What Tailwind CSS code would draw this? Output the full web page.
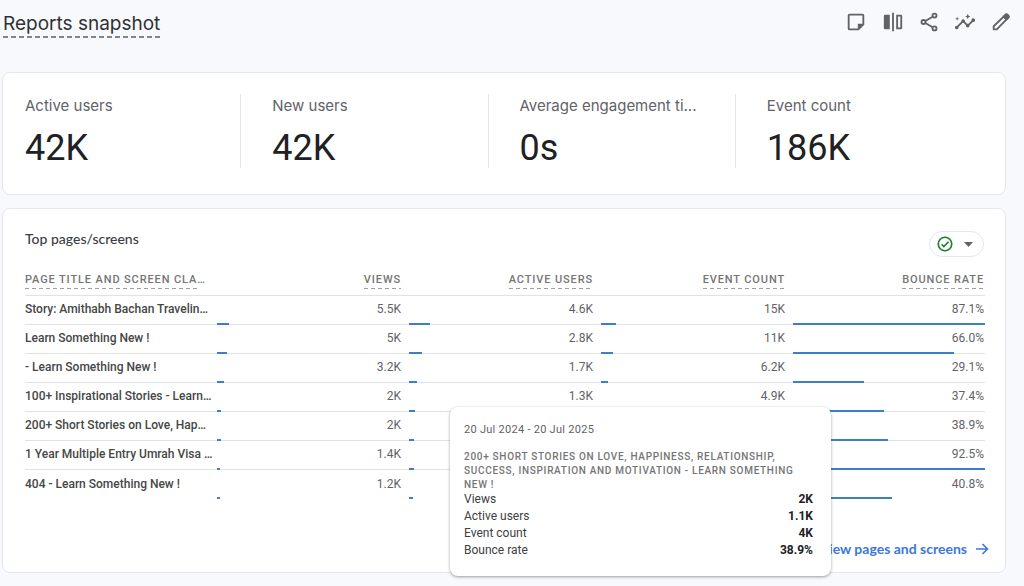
<!DOCTYPE html>
<html lang="en">
<head>
<meta charset="utf-8">
<meta name="viewport" content="width=device-width, initial-scale=1">
<title>Reports snapshot</title>
<script src="https://cdn.jsdelivr.net/npm/@tailwindcss/browser@4"></script>
</head>
<body class="relative min-h-screen bg-[#f8f9fc] font-[Roboto,sans-serif] text-[#3c4043]">
<header class="flex h-[72px] items-start justify-between pr-[5px] pl-[3px]">
  <h1 class="mt-2 h-[30px] bg-[repeating-linear-gradient(90deg,#80868b_0_5px,transparent_5px_8px)] bg-[length:100%_2px] bg-bottom bg-no-repeat font-[Inter,sans-serif] text-[19px] leading-8 text-[#303134]">Reports snapshot</h1>
  <div class="mt-1 flex text-[#5f6368]">
    <button type="button" aria-label="Notes" class="grid h-9 w-[37px] place-items-center"><svg class="size-[22px]" viewBox="0 0 24 24" fill="currentColor"><path d="M19 3H5a2 2 0 0 0-2 2v14a2 2 0 0 0 2 2h10l6-6V5a2 2 0 0 0-2-2zM5 19V5h14v9h-5v5z"/></svg></button>
    <button type="button" aria-label="Compare" class="grid h-9 w-[37px] place-items-center"><svg class="size-[22px]" viewBox="0 0 24 24" fill="currentColor"><path d="M3.500 4H8.500V20H3.500A1.500 1.500 0 0 1 2 18.500V5.500A1.500 1.500 0 0 1 3.500 4zM11 2h2v20h-2zM15.500 4h5A1.500 1.500 0 0 1 22 5.500v13a1.500 1.500 0 0 1-1.500 1.500h-5zM17.500 6v12H20V6z" fill-rule="evenodd"/></svg></button>
    <button type="button" aria-label="Share" class="grid h-9 w-9 place-items-center"><svg class="size-[22px]" viewBox="0 0 24 24" fill="none" stroke="currentColor" stroke-width="2"><circle cx="18" cy="5" r="2.200"/><circle cx="6" cy="12" r="2.200"/><circle cx="18" cy="19" r="2.200"/><path d="M8 10.900l8-4.700M8 13.100l8 4.700"/></svg></button>
    <button type="button" aria-label="Insights" class="grid h-9 w-9 place-items-center"><svg class="size-[22px]" viewBox="0 0 24 24" fill="currentColor"><path d="M21 8c-1.450 0-2.260 1.440-1.930 2.510l-3.550 3.560c-.3-.09-.74-.09-1.040 0l-2.550-2.550C12.270 10.450 11.460 9 10 9c-1.450 0-2.270 1.440-1.930 2.520l-4.560 4.550C2.440 15.740 1 16.550 1 18c0 1.100.9 2 2 2 1.450 0 2.260-1.440 1.930-2.510l4.550-4.560c.3.090.74.090 1.040 0l2.550 2.550C12.730 16.550 13.540 18 15 18c1.450 0 2.270-1.440 1.930-2.520l3.560-3.550C21.560 12.260 23 11.450 23 10c0-1.100-.9-2-2-2z"/><path d="M15 9l.94-2.070L18 6l-2.060-.93L15 3l-.92 2.070L12 6l2.080.93zM3.500 11L4 9l2-.5L4 8l-.5-2L3 8l-2 .5L3 9z"/></svg></button>
    <button type="button" aria-label="Edit" class="grid h-9 w-9 place-items-center"><svg class="size-[22px]" viewBox="0 0 24 24" fill="none" stroke="currentColor" stroke-width="2" stroke-linejoin="round"><path d="M4 20v-3.400L17.200 3.900a1.300 1.300 0 0 1 1.800 0l1.200 1.200a1.300 1.300 0 0 1 0 1.800L7.400 20z"/><path d="M14.800 6.200l3.100 3.100 2.600-2.600-3.100-3.100z" fill="currentColor"/></svg></button>
  </div>
</header>
<main class="mr-[18px] ml-[2px] flex flex-col gap-[13px] pb-3">
  <section aria-label="Key metrics" class="rounded-lg border border-[#e4e7eb] bg-white pt-[21px] pr-[22px] pb-[26px] pl-[22px]">
    <dl class="grid grid-cols-4 gap-[31px]">
      <div class="h-[74px] border-r border-[#e4e7eb]"><dt class="font-[Inter,sans-serif] text-[15px] leading-6 text-[#5f6368]">Active users</dt><dd class="pt-[10px] text-4xl text-[#202124]">42K</dd></div>
      <div class="h-[74px] border-r border-[#e4e7eb]"><dt class="font-[Inter,sans-serif] text-[15px] leading-6 text-[#5f6368]">New users</dt><dd class="pt-[10px] text-4xl text-[#202124]">42K</dd></div>
      <div class="h-[74px] border-r border-[#e4e7eb]"><dt class="font-[Inter,sans-serif] text-[15px] leading-6 whitespace-nowrap text-[#5f6368]">Average engagement ti...</dt><dd class="pt-[10px] text-4xl text-[#202124]">0s</dd></div>
      <div class="h-[74px]"><dt class="font-[Inter,sans-serif] text-[15px] leading-6 text-[#5f6368]">Event count</dt><dd class="pt-[10px] text-4xl text-[#202124]">186K</dd></div>
    </dl>
  </section>
  <section aria-labelledby="pages-title" class="rounded-lg border border-[#e4e7eb] bg-white pt-[22px] pr-5 pb-[11px] pl-[22px]">
    <div class="flex h-[26px] items-start justify-between">
      <h2 id="pages-title" class="font-[Lato,sans-serif] text-sm leading-4 font-medium text-[#3c4043]">Top pages/screens</h2>
      <button type="button" aria-label="Data quality" class="mr-px flex h-[26px] w-[55px] items-center justify-between rounded-full border border-[#e4e7eb] pr-2 pl-[6px]">
        <svg class="size-[18px]" viewBox="0 0 24 24" fill="none" stroke="#1e7e34" stroke-width="2.200"><circle cx="12" cy="12" r="9"/><path d="M7.500 12.300l3 3L16.700 9"/></svg>
        <svg class="h-[5px] w-[13px]" viewBox="0 0 13 5"><path d="M2 0h9L6.500 5z" fill="#5f6368"/></svg>
      </button>
    </div>
    <table class="w-full table-fixed border-separate border-spacing-0">
      <thead><tr id="head"></tr></thead>
      <tbody id="rows" class="text-xs text-[#5f6368]"></tbody>
    </table>
    <div class="mt-[38px] flex h-6 items-center justify-end">
      <a href="#" class="-mr-1 flex items-center gap-2 font-[Lato,sans-serif] text-sm font-bold text-[#3b78d8]">View pages and screens
        <svg class="size-[14px]" viewBox="0 0 14 14" fill="none" stroke="currentColor" stroke-width="1.600"><path d="M1 7h11M7.500 2l5 5-5 5"/></svg>
      </a>
    </div>
  </section>
</main>
<div role="tooltip" class="absolute top-[407px] left-[450px] w-[381px] rounded-lg bg-white px-[14px] pt-[15px] pb-[17px] text-xs shadow-[0_1px_3px_rgba(60,64,67,0.5)]">
  <p class="text-[11px] leading-4 tracking-wide text-[#5f6368]">20 Jul 2024 - 20 Jul 2025</p>
  <p class="mt-3 text-[10px] leading-[14px] font-medium tracking-[0.07em] text-[#757575] uppercase">200+ Short Stories on Love, Happiness, Relationship, Success, Inspiration and Motivation - Learn Something New !</p>
  <dl class="-mt-px mr-1 text-[#3c4043]">
    <div class="flex justify-between leading-[17px]"><dt>Views</dt><dd class="font-bold text-[#202124]">2K</dd></div>
    <div class="flex justify-between leading-[17px]"><dt>Active users</dt><dd class="font-bold text-[#202124]">1.1K</dd></div>
    <div class="flex justify-between leading-[17px]"><dt>Event count</dt><dd class="font-bold text-[#202124]">4K</dd></div>
    <div class="flex justify-between leading-[17px]"><dt>Bounce rate</dt><dd class="font-bold text-[#202124]">38.9%</dd></div>
  </dl>
</div>
<script>
// Each value is paired with its bar length as a percentage of the column.
const rows = [
  ['Story: Amithabh Bachan Travelin…', ['5.5K', 6], ['4.6K', 11], ['15K', 8], ['87.1%', 100]],
  ['Learn Something New !', ['5K', 5.3], ['2.8K', 6.8], ['11K', 6], ['66.0%', 84]],
  ['- Learn Something New !', ['3.2K', 3.5], ['1.7K', 4.1], ['6.2K', 3.4], ['29.1%', 37]],
  ['100+ Inspirational Stories - Learn…', ['2K', 2.2], ['1.3K', 3.2], ['4.9K', 2.7], ['37.4%', 47.6]],
  ['200+ Short Stories on Love, Hap…', ['2K', 2.2], ['', 2.7], ['', 2.2], ['38.9%', 49.5]],
  ['1 Year Multiple Entry Umrah Visa …', ['1.4K', 1.5], ['', 2.5], ['', 1.6], ['92.5%', 100]],
  ['404 - Learn Something New !', ['1.2K', 1.5], ['', 2.2], ['', 1.6], ['40.8%', 51.6]]
];
const heads = ['Page title and screen cla', 'Views', 'Active users', 'Event count', 'Bounce rate'];
document.getElementById('head').innerHTML = heads.map((h, i) =>
  `<th scope="col" class="h-[39px] border-b border-[#dfe2e6] p-0 pt-[14px] align-top text-[11px] leading-[18px] font-medium tracking-[0.08em] whitespace-nowrap text-[#757575] uppercase ${i ? 'text-right' : 'text-left'} ${i ? (i < 4 ? 'pr-2' : 'pr-px') : ''}"><span class="inline-block h-[18px] bg-[repeating-linear-gradient(90deg,#9aa0a6_0_4px,transparent_4px_7px)] bg-[length:100%_1px] bg-bottom bg-no-repeat">${h}</span>${i ? '' : '…'}</th>`).join('');
document.getElementById('rows').innerHTML = rows.map((r, n) => {
  const line = n < rows.length - 1 ? 'border-b border-[#dfe2e6]' : '';
  return `<tr><th scope="row" class="h-[29px] p-0 pb-[2px] text-left font-medium whitespace-nowrap text-[#444746] ${line}">${r[0]}</th>` +
    r.slice(1).map(([v, w], i) => `<td class="relative h-[29px] p-0 pb-[2px] text-right ${i < 3 ? 'pr-2' : 'pr-px'} ${line}">${v}<span class="absolute left-0 h-[2px] bg-[#3b80c4] ${n < rows.length - 1 ? '-bottom-px' : 'bottom-0'}" style="width:${w}%"></span></td>`).join('') + '</tr>';
}).join('');
</script>
</body>
</html>
